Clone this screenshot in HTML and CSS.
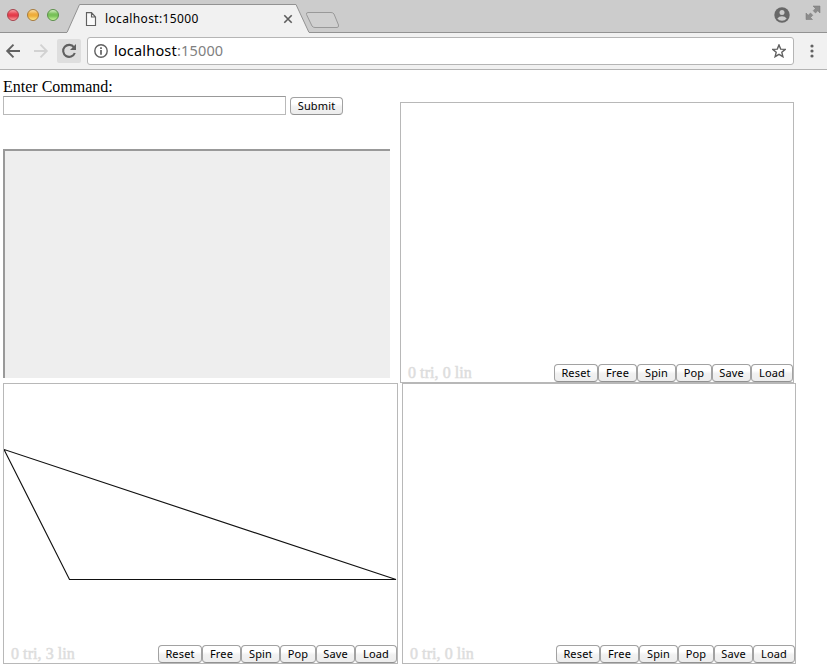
FILE: index.html
```
<!DOCTYPE html>
<html lang="en">
<head>
<meta charset="utf-8">
<title>localhost:15000</title>
<link rel="stylesheet" href="styles.css">
</head>
<body>
<header class="browser">
  <div class="tabbar">
    <svg class="tab-shape" width="827" height="33" viewBox="0 0 827 33">
      <path d="M0 32.500H67L79.500 4.500H296L309 32.500H827V34H0Z" fill="#f1f1f1" stroke="#929292"/>
      <path d="M67.500 32.500H308.500" stroke="#f1f1f1"/>
      <path d="M308 12.500H331Q333 12.500 334 14L338.500 25Q339 27.500 337 27.500H315Q313 27.500 312 26L306.500 14.500Q306 12.500 308 12.500Z" fill="#d0d0d0" stroke="#999"/>
    </svg>
    <div class="lights"><i class="light red"></i><i class="light amber"></i><i class="light green"></i></div>
    <svg class="page-icon" width="12" height="15" viewBox="0 0 12 15"><path d="M1.500 .6H6.500L10.500 5V13.500H1.500ZM6.500 .6V5H10.500" fill="#fafafa" stroke="#606060" stroke-width="1.150"/></svg>
    <span class="tab-title">localhost:15000</span>
    <svg class="close" width="10" height="10" viewBox="0 0 10 10"><path d="M1.300 1.300L8.700 8.700M8.700 1.300L1.300 8.700" stroke="#5c5c5c" stroke-width="1.600"/></svg>
    <svg class="user" width="16" height="16" viewBox="0 0 16 16"><circle cx="8" cy="8" r="7.700" fill="#686868"/><circle cx="8" cy="5.500" r="2.500" fill="#ccc"/><path d="M3.300 11.500Q5 9.200 8 9.200T12.700 11.500Q11 13.700 8 13.700T3.300 11.500Z" fill="#ccc"/></svg>
    <svg class="expand" width="16" height="16" viewBox="0 0 16 16"><path d="M8 1H15V8L12.800 5.800L10.500 8L8.200 5.700L10.400 3.400ZM1 8L3.200 10.200L5.500 8L7.800 10.300L5.500 12.500L7.500 14.500H1Z" fill="#8c8c8c" stroke="#777" stroke-width=".5"/></svg>
  </div>
  <div class="toolbar">
    <svg class="nav" width="83" height="36" viewBox="0 0 83 36">
      <path d="M20 18H7.500M13.500 11.700L7.200 18L13.500 24.300" fill="none" stroke="#626262" stroke-width="1.900"/>
      <path d="M34 18H46.500M40.500 11.700L46.800 18L40.500 24.300" fill="none" stroke="#d2d2d2" stroke-width="1.900"/>
      <rect x="57" y="6" width="24" height="24" rx="2" fill="#dedede"/>
      <path d="M74 14.300A6 6 0 1 0 74.800 20" fill="none" stroke="#606060" stroke-width="2.100"/><path d="M76 11V17H70Z" fill="#606060"/>
    </svg>
    <div class="omnibox">
      <svg class="info" width="14" height="14" viewBox="0 0 14 14"><circle cx="7" cy="7" r="6.200" fill="none" stroke="#606060" stroke-width="1.400"/><path d="M7 6V10.700M7 3.300V5" stroke="#606060" stroke-width="1.700"/></svg>
      <span class="url">localhost<span class="port">:15000</span></span>
      <svg class="star" width="14" height="14" viewBox="0 0 14 14"><path d="M7 .9L8.700 5.100L13.200 5.400L9.800 8.300L10.900 12.700L7 10.300L3.100 12.700L4.200 8.300L.8 5.400L5.300 5.100Z" fill="none" stroke="#606060" stroke-width="1.400"/></svg>
    </div>
    <svg class="menu" width="4" height="14" viewBox="0 0 4 14"><g fill="#626262"><circle cx="2" cy="2" r="1.600"/><circle cx="2" cy="7" r="1.600"/><circle cx="2" cy="12" r="1.600"/></g></svg>
  </div>
</header>
<main>
  <div class="row first">
    <section class="command">
      <label for="cmd">Enter Command:</label>
      <div class="entry"><input id="cmd" type="text"><button class="submit">Submit</button></div>
      <div class="output"></div>
    </section>
    <section class="panel upper">
      <div class="bar"><span class="stats">0 tri, 0 lin</span><button class="reset">Reset</button><button>Free</button><button>Spin</button><button class="pop">Pop</button><button>Save</button><button class="load">Load</button></div>
    </section>
  </div>
  <div class="row second">
    <section class="panel wide">
      <svg class="drawing" width="393" height="260" viewBox="0 0 393 260"><path d="M0 65.500L392 195.500H65.500Z" fill="none" stroke="#111" stroke-width="1.150"/></svg>
      <div class="bar"><span class="stats">0 tri, 3 lin</span><button class="reset">Reset</button><button>Free</button><button>Spin</button><button class="pop">Pop</button><button>Save</button><button class="load">Load</button></div>
    </section>
    <section class="panel">
      <div class="bar"><span class="stats">0 tri, 0 lin</span><button class="reset">Reset</button><button>Free</button><button>Spin</button><button class="pop">Pop</button><button>Save</button><button class="load">Load</button></div>
    </section>
  </div>
</main>
</body>
</html>
```
FILE: styles.css
```
* { box-sizing: border-box; }
body { margin: 0; width: 827px; height: 668px; overflow: hidden; background: #fff; font: 16px "Liberation Serif", serif; color: #000; }
svg { display: block; flex: none; }
.browser { height: 70px; background: #f1f1f1; border-bottom: 1px solid #b3b3b3; font-family: "Noto Sans", sans-serif; }
.tabbar { position: relative; height: 33px; display: flex; align-items: flex-start; background: #ccc; }
.tab-shape { position: absolute; left: 0; top: 0; }
.lights, .page-icon, .tab-title, .close { position: relative; }
.lights { display: flex; gap: 8px; padding: 9px 0 0 7px; width: 85px; }
.light { width: 12px; height: 12px; border-radius: 50%; border: 1px solid; }
.red { background: linear-gradient(#f6a0a6, #e8414f 40%, #e03a4a 60%, #ffa0a0); border-color: #a8404a; }
.amber { background: linear-gradient(#fbe0a8, #eeac3c 40%, #eeae3a 60%, #ffea88); border-color: #a87a38; }
.green { background: linear-gradient(#d5efc4, #78c058 40%, #78c258 60%, #c8f79a); border-color: #5a8f48; }
.page-icon { margin-top: 12px; }
.tab-title { margin: 10px 0 0 8px; width: 178px; font-size: 12px; line-height: 17px; letter-spacing: .36px; white-space: nowrap; }
.close { margin-top: 14px; }
.user { position: relative; margin: 7px 0 0 481px; }
.expand { position: relative; margin: 5px 0 0 15px; }
.toolbar { height: 36px; display: flex; align-items: center; }
.omnibox { width: 707px; height: 28px; margin-left: 4px; border: 1px solid #b5b5b5; border-radius: 3px; background: #fff; display: flex; align-items: center; padding: 0 7px 0 6px; }
.url { margin: 0 0 2px 6px; font-size: 14.500px; line-height: 20px; letter-spacing: .18px; }
.port { color: #808080; }
.star { margin-left: auto; }
.menu { margin-left: 16px; }
main { padding-left: 3px; }
.row { display: flex; }
.first { height: 313px; }
.second { gap: 4px; }
.command { width: 397px; padding-top: 8px; }
.command label { display: block; height: 18px; line-height: 18px; }
.entry { display: flex; gap: 4px; height: 20px; }
input { width: 283px; height: 19px; margin: 0; padding: 0; border: 1px solid #b9b9b9; border-top-color: #999; border-radius: 0; outline: 0; }
button { width: 39px; height: 18px; margin: 0; padding: 0; border: 1px solid #a2a2a2; border-bottom-color: #929292; border-radius: 4px; background: linear-gradient(#fff 0 35%, #f1f1f1 55%, #ededed); font: 11px/14px "Noto Sans", sans-serif; letter-spacing: .15px; color: #000; flex: none; }
.submit { width: 53px; margin-top: 1px; }
.output { width: 387px; height: 229px; margin-top: 33px; background: #eee; border: solid #999; border-width: 2px 0 0 2px; }
.panel { position: relative; width: 394px; height: 281px; border: 1px solid #b8b8b8; display: flex; flex-direction: column; justify-content: flex-end; }
.upper { margin-top: 32px; }
.wide { width: 395px; }
.bar { display: flex; align-items: flex-end; height: 18px; }
.stats { flex: 1; padding-left: 7px; color: #ddd; line-height: 18px; letter-spacing: .06px; -webkit-text-stroke: .5px #ddd; }
.reset { width: 44px; }
.pop { width: 36px; }
.load { width: 42px; }
.drawing { position: absolute; left: 0; top: 0; }
```
